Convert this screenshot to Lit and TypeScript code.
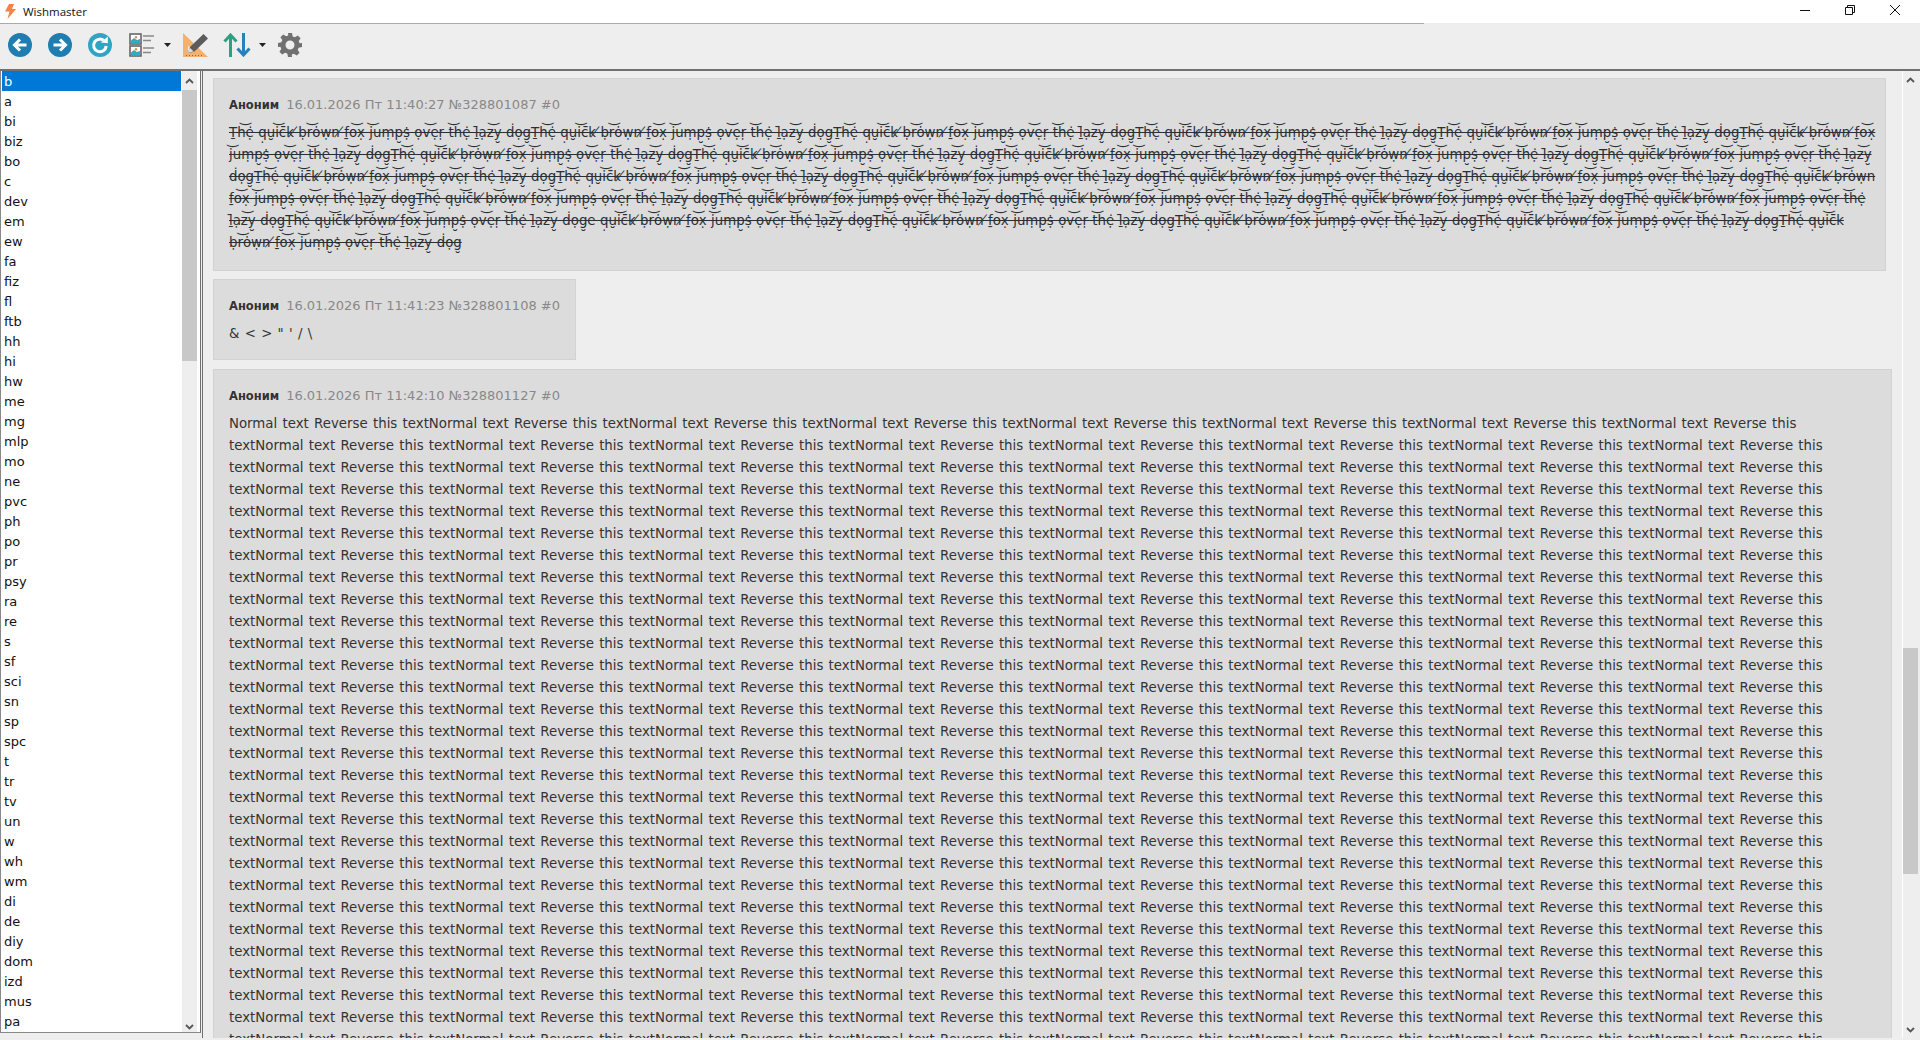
import { LitElement, html, css, svg } from "lit";
import { customElement } from "lit/decorators.js";

const BOARDS = "b a bi biz bo c dev em ew fa fiz fl ftb hh hi hw me mg mlp mo ne pvc ph po pr psy ra re s sf sci sn sp spc t tr tv un w wh wm di de diy dom izd mus pa".split(" ");

const SMILE = "\u035D";
const UNDER = "\u032E";
const DOT = "\u0323";
const TOP = "\u0307";
const BAR = "\u0331";
const WORDS: Record<string, string> = {
  The: `T${BAR}h${SMILE}e${TOP}${DOT}`,
  e: `e${TOP}${DOT}`,
  quick: `q${DOT}u${UNDER}i${SMILE}c\u0304\u0304k`,
  brown: `b${DOT}r${SMILE}o${TOP}w${DOT}n`,
  fox: `f${BAR}o${SMILE}x${DOT}`,
  jumps: `j${SMILE}um${DOT}p${UNDER}s${TOP}${DOT}`,
  over: `o${DOT}v${SMILE}e${DOT}r${DOT}`,
  the: `t${SMILE}he${TOP}${DOT}`,
  lazy: `l\u0304${BAR}a${DOT}z${SMILE}y${UNDER}`,
  dog: `d${TOP}o${DOT}g${UNDER}`,
};
const zalgo = (s: string) =>
  s
    .replace(/quick brown/g, "quick\u00A0\u0338brown")
    .replace(/brown fox/g, "brown\u00A0\u0338fox")
    .replace(/The|quick|brown|fox|jumps|over|the|lazy|dog|\be\b/g, (w) => WORDS[w]);

const FULL = "The quick brown fox jumps over the lazy dog";
const rep = (n: number) => FULL.repeat(n);
const ZALGO_LINES = [
  rep(5) + "The quick brown fox",
  "jumps over the lazy dog" + rep(4) + "The quick brown fox jumps over the lazy",
  "dog" + rep(5) + "The quick brown",
  "fox jumps over the lazy dog" + rep(4) + "The quick brown fox jumps over the",
  "lazy dog" + FULL + "e quick brown fox jumps over the lazy dog" + rep(3) + "The quick",
  "brown fox jumps over the lazy dog",
].map(zalgo);

const UNIT = "Normal text Reverse this text";
const REVERSE_LINES = [
  UNIT.repeat(7) + "Normal text Reverse this",
  ...Array.from({ length: 30 }, () => "text" + "Normal text Reverse this text".repeat(7) + "Normal text Reverse this"),
];

const chevronUp = svg`<svg width="9" height="6" viewBox="0 0 9 6"><path d="M1 5 L4.5 1.6 L8 5" fill="none" stroke="#555" stroke-width="1.8"/></svg>`;
const caret = svg`<svg class="caret" width="7" height="4" viewBox="0 0 7 4"><path d="M0 0H7L3.5 4Z" fill="#222"/></svg>`;

@customElement("app-root")
export class AppRoot extends LitElement {
  static styles = css`
    :host { display: block; width: 1920px; height: 1040px; overflow: hidden; background: #eee; font-family: "DejaVu Sans", sans-serif; }
    .title { height: 23px; background: #fff; display: flex; align-items: center; color: #111; font: 11.5px "Open Sans", sans-serif; }
    .logo { margin: 0 7px 0 5px; }
    .spacer { flex: 1; }
    .winbtns { display: flex; align-items: center; margin: 0 20px 3px 0; gap: 35px; }
    .rule { width: 1424px; height: 1px; background: #aaa; }
    .toolbar { height: 45px; box-sizing: border-box; padding: 0 0 3px 8px; display: flex; align-items: center; }
    .toolbar svg { display: block; }
    .tool { width: 24px; height: 24px; margin-right: 16px; }
    .tool.refresh { margin-right: 17px; }
    .tool.list { width: 26px; margin: 0 9px 0 0; }
    .tool.ruler { width: 26px; margin: 0 14px 0 12px; }
    .tool.arrows { width: 28px; margin: 0 8px 0 0; }
    .tool.gear { margin: 0 0 0 12px; }
    .body { height: 970px; border-top: 2px solid #707070; display: flex; }
    .side { width: 198px; height: 961px; background: #fff; border-left: 1px solid #888; border-right: 1px solid #707070; border-bottom: 1px solid #888; padding-left: 1px; display: flex; box-sizing: content-box; }
    .list { width: 179px; font-size: 13px; color: #111; }
    .row { height: 20px; line-height: 21px; padding-left: 2px; }
    .row.sel { background: #0078d7; color: #fff; }
    .sbar { width: 15px; margin-left: 1px; background: #eee; display: flex; flex-direction: column; position: relative; }
    .sbar svg { position: absolute; left: 3px; }
    .up { height: 19px; display: flex; align-items: center; justify-content: center; }
    .thumb { background: #c8c8c8; }
    .side .thumb { height: 271px; }
    .main { margin-left: 1px; flex: 1; min-width: 0; height: 967px; border-left: 1px solid #707070; display: flex; }
    .scroll { flex: 1; min-width: 0; padding: 7px 0 0 10px; overflow: hidden; display: flex; flex-direction: column; gap: 8px; border-right: 1px solid #fff; }
    .card { background: #dcdcdc; border: 1px solid #d2d2d2; padding: 15px; flex: none; color: #333; font-size: 13.33px; word-spacing: 1.05px; }
    .card.c1 { width: 1641px; padding-bottom: 17px; word-spacing: 0.2px; }
    .card.c2 { width: fit-content; }
    .card.c3 { width: 1647px; margin-top: 1px; }
    .meta { height: 22px; line-height: 22px; color: #888; margin-bottom: 5px; white-space: nowrap; font-size: 13px; word-spacing: 0; }
    .meta b { color: #333; margin-right: 7px; font-size: 11.5px; }
    .line { height: 22px; line-height: 23px; white-space: nowrap; }
    .z { text-decoration: line-through; color: #2a2f36; }
    .msb { width: 15px; margin: 0 2px 0 0; background: #eee; position: relative; }
    .msb .thumb { position: absolute; left: 0; top: 577px; width: 15px; height: 226px; }
    .msb svg { position: absolute; left: 3px; }
    .sb-bottom { top: 953px; }
    .msb-top { top: 6px; }
    .msb-bottom { top: 956px; }
  `;

  render() {
    return html`
      <div class="title">
        <svg class="logo" width="11" height="15" viewBox="0 0 11 15"><path d="M4 0H9L7 5H11L2.5 15L4.5 7.5H0Z" fill="#f5824a"/></svg>
        Wishmaster
        <span class="spacer"></span>
        <div class="winbtns">
          <svg width="10" height="10" viewBox="0 0 10 10"><path d="M0 5.5H10" stroke="#111"/></svg>
          <svg width="10" height="10" viewBox="0 0 10 10"><path d="M.5 2.5H7.5V9.5H.5ZM2.5 2.5V.5H9.5V7.5H7.5" fill="none" stroke="#111"/></svg>
          <svg width="10" height="10" viewBox="0 0 10 10"><path d="M0 0L10 10M10 0L0 10" stroke="#111" stroke-width="1"/></svg>
        </div>
      </div>
      <div class="rule"></div>
      <div class="toolbar">
        <svg class="tool" viewBox="0 0 24 24"><circle cx="12" cy="12" r="12" fill="#1f7db0"/><path d="M18.500 12H7M12 6.500L6.500 12L12 17.500" fill="none" stroke="#fff" stroke-width="3"/></svg>
        <svg class="tool" viewBox="0 0 24 24"><circle cx="12" cy="12" r="12" fill="#1f7db0"/><path d="M5.500 12H17M12 6.500L17.500 12L12 17.500" fill="none" stroke="#fff" stroke-width="3"/></svg>
        <svg class="tool refresh" viewBox="0 0 24 24"><circle cx="12" cy="12" r="12" fill="#2fa5c4"/><path d="M16.600 8.200A6.300 6.300 0 1 0 18.200 13" fill="none" stroke="#fff" stroke-width="3"/><path d="M12.800 9.400L19.800 10.200V3.600Z" fill="#fff"/></svg>
        <svg class="tool list" viewBox="0 0 26 24"><rect x="1" y="1" width="11" height="10" fill="#fff" stroke="#666" stroke-width="1.600"/><path d="M2 7.500L5 5L8 7L11 6V10H2Z" fill="#35a7c9"/><circle cx="7" cy="4.200" r="1.200" fill="#f08a3c"/><rect x="1" y="13" width="11" height="10" fill="#fff" stroke="#666" stroke-width="1.600"/><path d="M2 19.500L5 17L8 19L11 18V22H2Z" fill="#35a7c9"/><circle cx="7" cy="16.200" r="1.200" fill="#f08a3c"/><path d="M14 3H25M14 7.500H22M14 15H25M14 19.500H22" stroke="#888" stroke-width="1.500"/></svg>
        ${caret}
        <svg class="tool ruler" viewBox="0 0 26 24"><path d="M0 0L25 24H0Z" fill="#f4b06c"/><path d="M5 12.500L11.500 19H5Z" fill="#eee"/><path d="M3 22.500H20" stroke="#8a6a45" stroke-width="1" stroke-dasharray="1 2"/><path d="M5 20L7 14L20.500 1L25 5.500L11.500 18.500Z" fill="#5c5c5c"/><path d="M5 20L6.800 14.800L10.500 18.300Z" fill="#ddd"/></svg>
        <svg class="tool arrows" viewBox="0 0 28 24"><path d="M7.500 24V2M1.500 8.500L7.500 2L13.500 8.500" fill="none" stroke="#2ea082" stroke-width="3"/><path d="M20.500 0V22M14.500 15.500L20.500 22L26.500 15.500" fill="none" stroke="#2a81b8" stroke-width="3"/></svg>
        ${caret}
        <svg class="tool gear" viewBox="0 0 24 24"><path fill="#707070" fill-rule="evenodd" d="M10 0h4l.7 3.400 2.200.9 2.900-1.900 2.800 2.800-1.900 2.900.9 2.200L24 10v4l-3.400.7-.9 2.200 1.900 2.900-2.800 2.800-2.900-1.900-2.200.9L14 24h-4l-.7-3.400-2.200-.9-2.900 1.900-2.800-2.800 1.900-2.900-.9-2.200L0 14v-4l3.400-.7.9-2.200-1.900-2.900 2.800-2.800 2.900 1.900 2.200-.9ZM12 7.500a4.500 4.500 0 1 0 0 9a4.500 4.500 0 0 0 0-9Z"/></svg>
      </div>
      <div class="body">
        <div class="side">
          <div class="list">
            ${BOARDS.map((b, i) => html`<div class="row ${i === 0 ? "sel" : ""}">${b}</div>`)}
          </div>
          <div class="sbar">
            <div class="up">${chevronUp}</div>
            <div class="thumb"></div>
            <svg class="sb-bottom" width="9" height="6" viewBox="0 0 9 6"><path d="M1 1 L4.500 4.400 L8 1" fill="none" stroke="#555" stroke-width="1.800"/></svg>
          </div>
        </div>
        <div class="main">
          <div class="scroll">
            <div class="card c1">
              <div class="meta"><b>Аноним</b>16.01.2026 Пт 11:40:27 №328801087 #0</div>
              ${ZALGO_LINES.map((l) => html`<div class="line z">${l}</div>`)}
            </div>
            <div class="card c2">
              <div class="meta"><b>Аноним</b>16.01.2026 Пт 11:41:23 №328801108 #0</div>
              <div class="line">&amp; &lt; &gt; " ' / \\</div>
            </div>
            <div class="card c3">
              <div class="meta"><b>Аноним</b>16.01.2026 Пт 11:42:10 №328801127 #0</div>
              ${REVERSE_LINES.map((l) => html`<div class="line">${l}</div>`)}
            </div>
          </div>
          <div class="msb">
            <svg class="msb-top" width="9" height="6" viewBox="0 0 9 6"><path d="M1 5 L4.500 1.600 L8 5" fill="none" stroke="#555" stroke-width="1.800"/></svg>
            <div class="thumb"></div>
            <svg class="msb-bottom" width="9" height="6" viewBox="0 0 9 6"><path d="M1 1 L4.500 4.400 L8 1" fill="none" stroke="#555" stroke-width="1.800"/></svg>
          </div>
        </div>
      </div>
    `;
  }
}
